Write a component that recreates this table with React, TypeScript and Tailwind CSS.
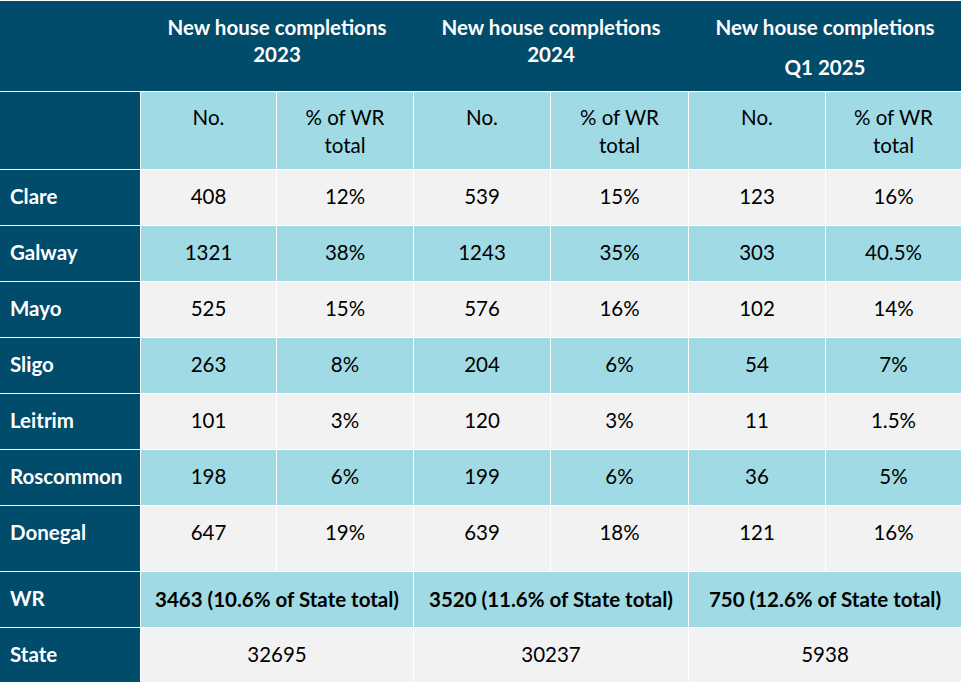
import React from "react";

type Row = {
  name: string;
  values: string[];
  tone: "gray" | "blue";
};

const rows: Row[] = [
  { name: "Clare", values: ["408", "12%", "539", "15%", "123", "16%"], tone: "gray" },
  { name: "Galway", values: ["1321", "38%", "1243", "35%", "303", "40.5%"], tone: "blue" },
  { name: "Mayo", values: ["525", "15%", "576", "16%", "102", "14%"], tone: "gray" },
  { name: "Sligo", values: ["263", "8%", "204", "6%", "54", "7%"], tone: "blue" },
  { name: "Leitrim", values: ["101", "3%", "120", "3%", "11", "1.5%"], tone: "gray" },
  { name: "Roscommon", values: ["198", "6%", "199", "6%", "36", "5%"], tone: "blue" },
  { name: "Donegal", values: ["647", "19%", "639", "18%", "121", "16%"], tone: "gray" },
];

const wrTotals = [
  "3463 (10.6% of State total)",
  "3520 (11.6% of State total)",
  "750 (12.6% of State total)",
];
const stateTotals = ["32695", "30237", "5938"];

const font = { fontFamily: "Lato, 'Liberation Sans', sans-serif" };

function LabelCell({ children }: { children?: React.ReactNode }) {
  return (
    <div className="bg-[#014b6b] pl-[10px] pt-3 leading-[28px] font-bold text-white">
      {children}
    </div>
  );
}

export default function App() {
  return (
    <div
      style={font}
      className="w-[961px] h-[682px] bg-white pt-px grid gap-px grid-cols-[140px_135px_136px_136px_137px_136px_135px] grid-rows-[90px_77px_repeat(6,55px)_65px_55px_54px] text-[20.5px] text-black"
    >
      {/* header band: no white rules inside */}
      <div className="col-span-7 bg-[#014b6b] grid gap-px grid-cols-[140px_135px_136px_136px_137px_136px_135px] text-white font-bold text-center">
        <div />
        <div className="col-span-2 pt-[13px] leading-[27px]">
          <div>New house completions</div>
          <div>2023</div>
        </div>
        <div className="col-span-2 pt-[13px] leading-[27px]">
          <div>New house completions</div>
          <div>2024</div>
        </div>
        <div className="col-span-2 pt-[13px] leading-[27px]">
          <div>New house completions</div>
          <div className="mt-[13px]">Q1 2025</div>
        </div>
      </div>

      {/* sub header */}
      <LabelCell />
      {[0, 1, 2].map((i) => (
        <React.Fragment key={i}>
          <div className="bg-[#9fdae5] pt-[11px] text-center leading-[28px]">No.</div>
          <div className="bg-[#9fdae5] pt-[11px] text-center leading-[28px]">
            % of WR
            <br />
            total
          </div>
        </React.Fragment>
      ))}

      {rows.map((row) => (
        <React.Fragment key={row.name}>
          <LabelCell>{row.name}</LabelCell>
          {row.values.map((v, i) => (
            <div
              key={i}
              className={`${row.tone === "blue" ? "bg-[#9fdae5]" : "bg-[#f2f2f2]"} pt-3 text-center leading-[28px]`}
            >
              {v}
            </div>
          ))}
        </React.Fragment>
      ))}

      <LabelCell>WR</LabelCell>
      {wrTotals.map((t) => (
        <div key={t} className="col-span-2 bg-[#9fdae5] pt-[13px] text-center leading-[28px] font-bold">
          {t}
        </div>
      ))}

      <LabelCell>State</LabelCell>
      {stateTotals.map((t) => (
        <div key={t} className="col-span-2 bg-[#f2f2f2] pt-3 text-center leading-[28px]">
          {t}
        </div>
      ))}
    </div>
  );
}
